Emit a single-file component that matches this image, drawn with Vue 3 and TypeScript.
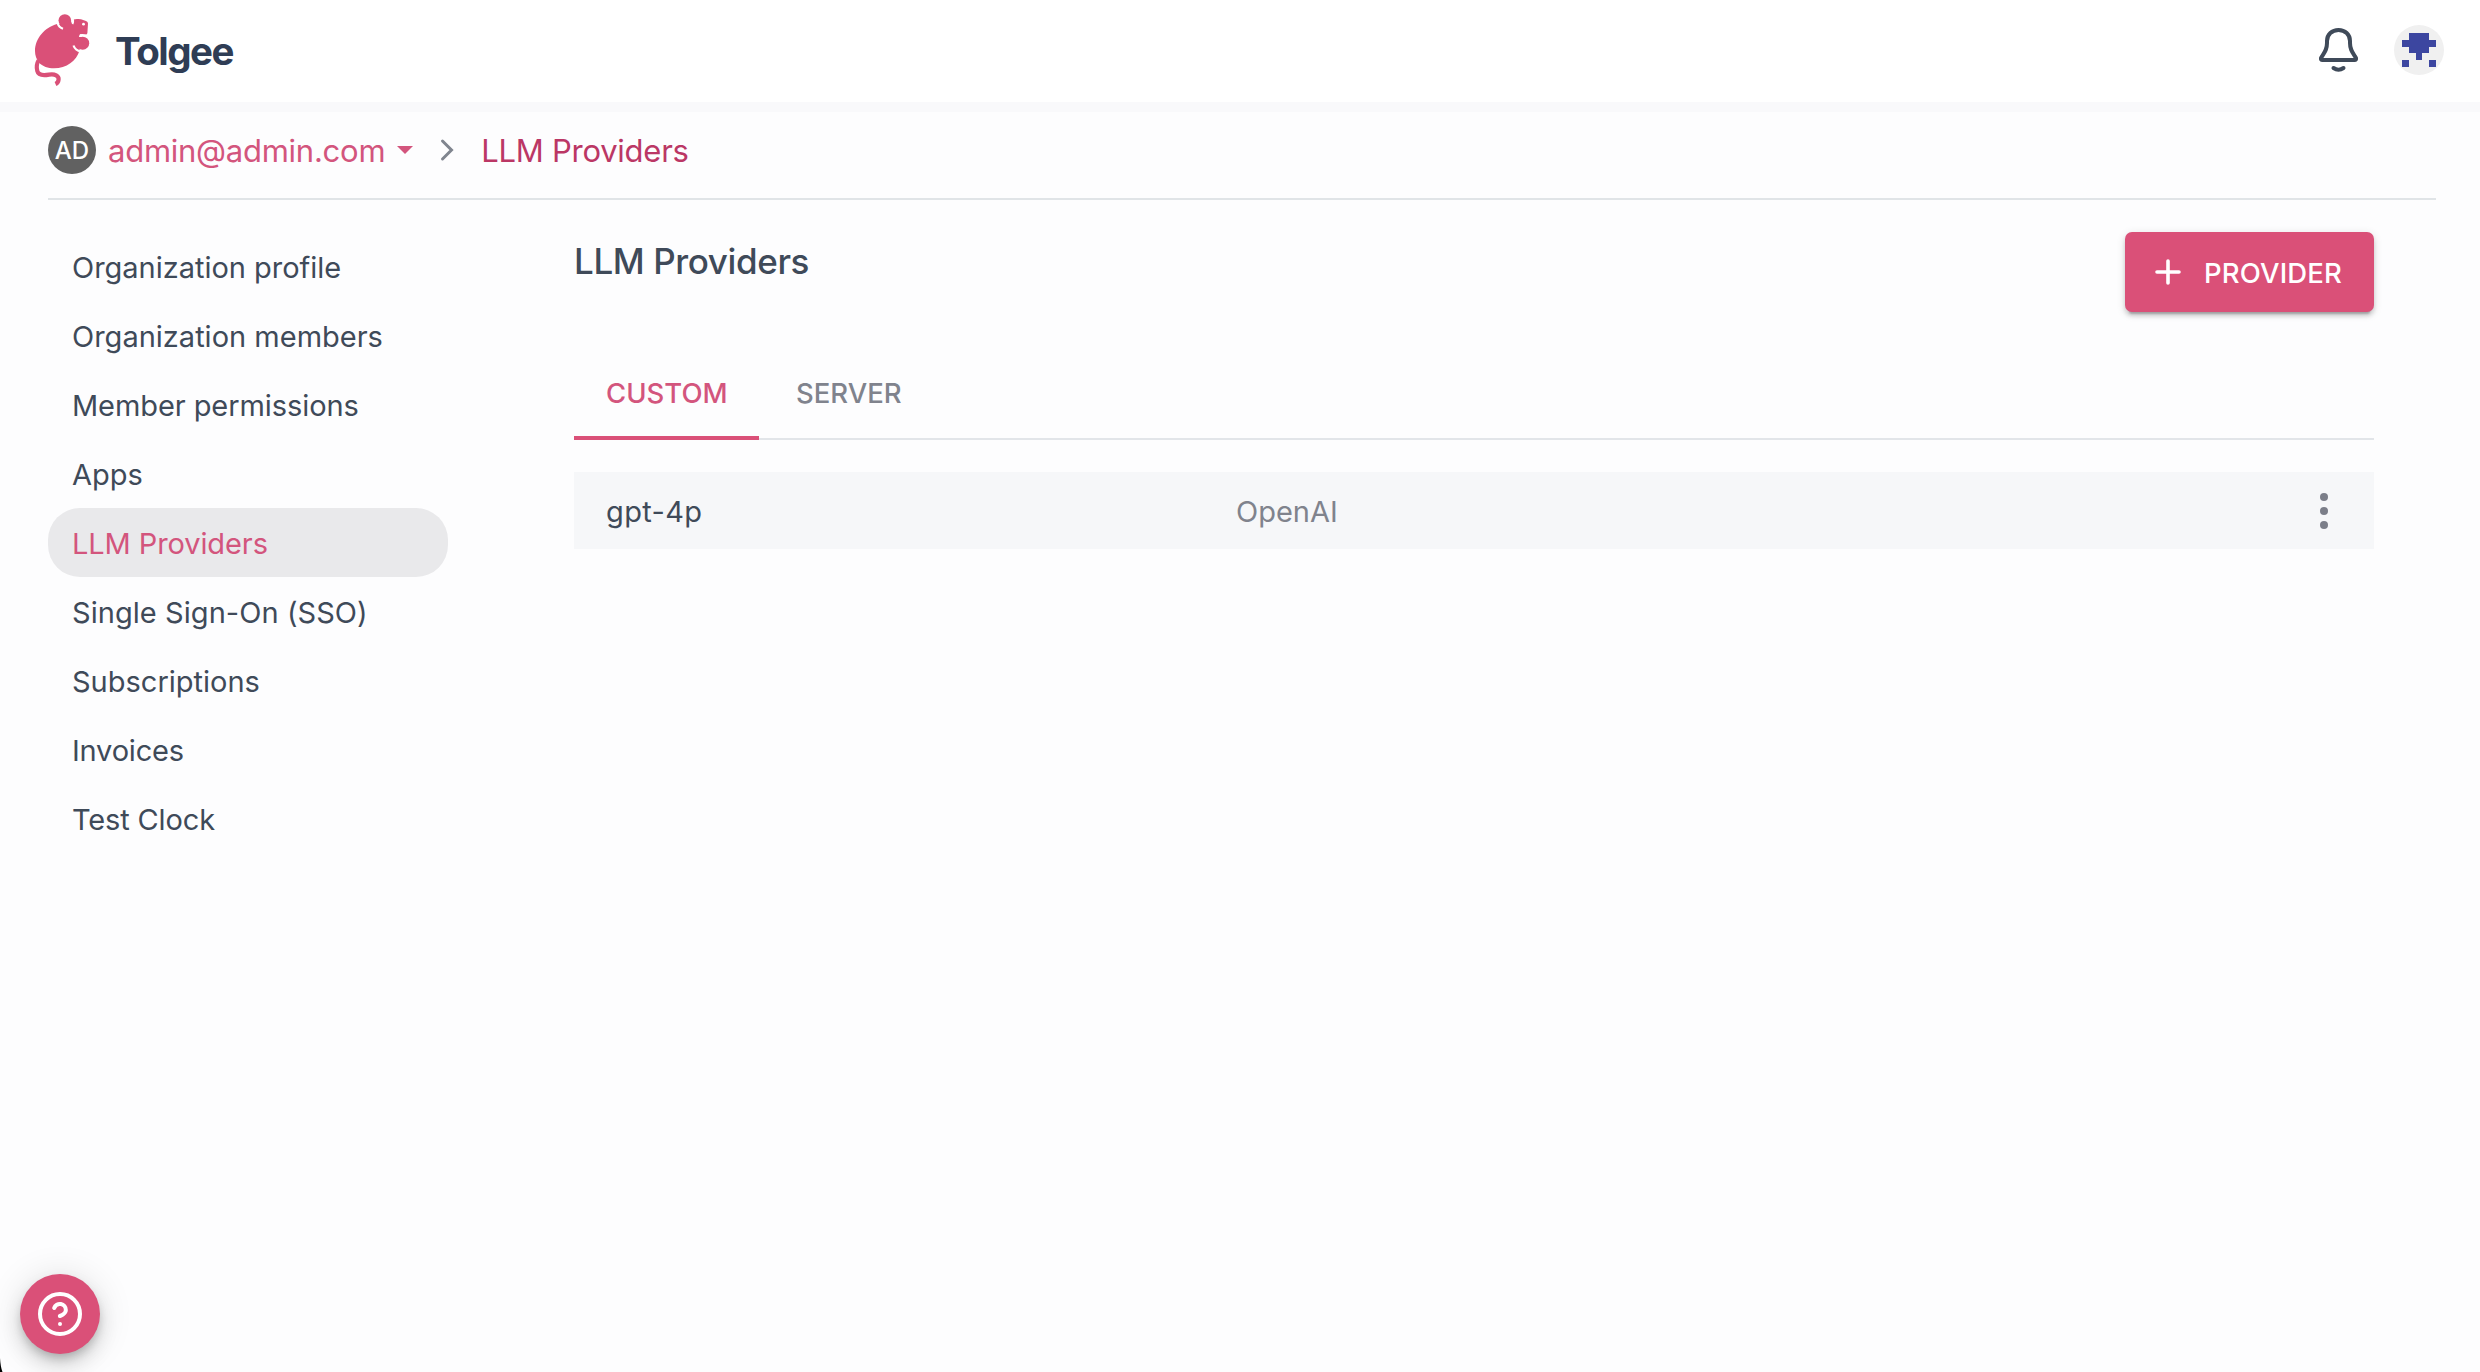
<script setup lang="ts">
interface MenuItem {
  label: string
  tracking: number
  active?: boolean
}

interface Provider {
  name: string
  type: string
}

const menu: MenuItem[] = [
  { label: 'Organization profile', tracking: -0.02 },
  { label: 'Organization members', tracking: 0 },
  { label: 'Member permissions', tracking: -0.08 },
  { label: 'Apps', tracking: 0 },
  { label: 'LLM Providers', tracking: -0.1, active: true },
  { label: 'Single Sign-On (SSO)', tracking: 0.06 },
  { label: 'Subscriptions', tracking: 0 },
  { label: 'Invoices', tracking: -0.2 },
  { label: 'Test Clock', tracking: -0.15 },
]

const tabs: string[] = ['Custom', 'Server']
const activeTab = 'Custom'

const providers: Provider[] = [{ name: 'gpt-4p', type: 'OpenAI' }]

// Filled cells of the 5×5 identicon, as [column, row]
const identicon: [number, number][] = [
  [1, 0], [2, 0], [3, 0],
  [0, 1], [1, 1], [2, 1], [3, 1], [4, 1],
  [1, 2], [2, 2], [3, 2],
  [2, 3],
  [0, 4], [4, 4],
]
</script>

<template>
  <div class="page">
    <header class="topbar">
      <a class="brand">
        <svg class="mouse" width="60" height="74" viewBox="32 12 60 74">
          <path
            class="fill"
            d="M57 24C44.500 27.500 35 38.500 35 51C35 55.500 36.500 59.500 39 62.500C42.500 66.500 48 68.300 54 68.300C66.500 68.300 76.500 61 79.500 50.500L80 46L79 36L80 34.500L85.500 34.800Q87.300 34.800 87.400 33L88 23.500Q88 21.500 86 21L81 19.300Q79 18.800 77 19L73.500 19.500L71 24L64 24Z"
          />
          <path class="gap" d="M57.500 23C58.500 26 60.500 28 63 28.800" />
          <path class="gap" d="M72 17.500C73.300 19.800 73.300 22 72.300 24" />
          <path class="gap" d="M73.500 45.500C74.500 48.500 77 50.800 81 51.500" />
          <path class="gap" d="M80 35.300C83 34.700 86 35.300 89 37" />
          <circle class="fill" cx="64.800" cy="20.500" r="6.300" />
          <circle class="fill" cx="82.700" cy="43.200" r="6.500" />
          <path class="fill" d="M64 22L71 21L73 28L66 29ZM76 37L82 37L83 44L75 43Z" />
          <circle cx="83.500" cy="24.200" r="1.400" fill="#fff" />
          <path class="tail" d="M38.500 60.500C36.500 64 36.500 68 37.300 71C38.500 76 44 75.500 49 74.600C55 73.500 59 76 58.600 79.500C58.400 81.800 57 83.300 55.500 84" />
        </svg>
        <span class="brand-name">Tolgee</span>
      </a>
      <div class="actions">
        <svg class="bell" width="44" height="50" viewBox="0 0 44 50">
          <path d="M5 34C8.500 28.500 11 26 11 19V17C11 10.500 16 6 22.500 6S34 10.500 34 17V19C34 26 36.500 28.500 40 34Q40.500 36 38.500 36H6.500Q4.500 36 5 34Z" />
          <path d="M17.500 44Q22.500 47.500 27.500 44" />
        </svg>
        <div class="user">
          <svg width="34" height="34" viewBox="0 0 5 5" shape-rendering="crispEdges">
            <rect v-for="([x, y], i) in identicon" :key="i" :x="x" :y="y" width="1" height="1" fill="#3c46a0" />
          </svg>
        </div>
      </div>
    </header>

    <nav class="breadcrumb">
      <div class="org-avatar">AD</div>
      <span class="org">admin@admin.com</span>
      <svg class="caret" width="16" height="8" viewBox="0 0 16 8"><path d="M0 0H16L8 8Z" /></svg>
      <svg class="chevron" width="14" height="24" viewBox="0 0 14 24"><path d="M2.500 3L11.500 12L2.500 21" /></svg>
      <span class="current">LLM Providers</span>
    </nav>

    <div class="body">
      <aside class="menu">
        <a
          v-for="item in menu"
          :key="item.label"
          class="menu-item"
          :class="{ active: item.active }"
          :style="{ letterSpacing: item.tracking + 'px' }"
        >{{ item.label }}</a>
      </aside>

      <main class="content">
        <div class="heading">
          <h1>LLM Providers</h1>
          <button class="add">
            <svg width="26" height="26" viewBox="0 0 26 26"><path d="M13 2V24M2 13H24" /></svg>
            <span>PROVIDER</span>
          </button>
        </div>

        <div class="tabs">
          <div v-for="tab in tabs" :key="tab" class="tab" :class="{ selected: tab === activeTab }">
            <span>{{ tab.toUpperCase() }}</span>
          </div>
        </div>

        <div v-for="p in providers" :key="p.name" class="row">
          <span class="name">{{ p.name }}</span>
          <span class="type">{{ p.type }}</span>
          <svg class="more" width="8" height="36" viewBox="0 0 8 36">
            <circle cx="4" cy="4" r="4" />
            <circle cx="4" cy="18" r="4" />
            <circle cx="4" cy="32" r="4" />
          </svg>
        </div>
      </main>
    </div>

    <button class="help">
      <svg width="48" height="48" viewBox="0 0 24 24">
        <circle cx="12" cy="12" r="10" />
        <path d="M9.090 9a3 3 0 0 1 5.830 1c0 2-3 3-3 3M12 17h.01" />
      </svg>
    </button>
    <svg class="corner" width="3" height="14" viewBox="0 0 3 14"><path d="M0 0Q0.500 9 2.500 14H0Z" /></svg>
  </div>
</template>

<style>
body {
  margin: 0;
  background: #fdfdfe;
}
</style>

<style scoped>
.page {
  position: relative;
  box-sizing: border-box;
  width: 2480px;
  height: 1372px;
  overflow: hidden;
  background: #fdfdfe;
  color: #3f4a59;
  font-family: Inter, 'Liberation Sans', sans-serif;
  font-size: 29px;
}

svg {
  display: block;
  flex: none;
}

.topbar {
  display: flex;
  align-items: center;
  justify-content: space-between;
  box-sizing: border-box;
  height: 102px;
  padding: 0 36px 0 32px;
  background: #fff;
  box-shadow: 0 10px 0 #f9f9fb;
}

.brand {
  display: flex;
  align-items: center;
  gap: 23px;
}

.mouse {
  margin-bottom: 4px;
}

.mouse .fill {
  fill: #da5078;
}

.mouse .gap {
  fill: none;
  stroke: #fff;
  stroke-width: 2.2;
}

.mouse .tail {
  fill: none;
  stroke: #da5078;
  stroke-width: 4.2;
}

.brand-name {
  color: #2f3d55;
  font-size: 38.5px;
  font-weight: 700;
  letter-spacing: -1.5px;
}

.actions {
  display: flex;
  align-items: center;
  gap: 34px;
}

.bell {
  margin-bottom: 4px;
  fill: none;
  stroke: #3f4a59;
  stroke-width: 4;
  stroke-linecap: round;
  stroke-linejoin: round;
}

.user {
  display: flex;
  align-items: center;
  justify-content: center;
  width: 50px;
  height: 50px;
  margin-bottom: 2px;
  border-radius: 50%;
  background: #f0f0f0;
}

.breadcrumb {
  display: flex;
  align-items: center;
  box-sizing: border-box;
  height: 98px;
  margin: 0 44px 0 48px;
  border-bottom: 2px solid #e0e4e7;
  font-size: 31px;
}

.org-avatar {
  display: flex;
  align-items: center;
  justify-content: center;
  width: 48px;
  height: 48px;
  border-radius: 50%;
  background: #616161;
  color: #fff;
  font-size: 24px;
  font-weight: 500;
}

.org {
  margin-left: 12px;
  color: #d3557d;
  letter-spacing: -0.25px;
}

.caret {
  margin-left: 12px;
  fill: #d3557d;
}

.chevron {
  margin-left: 27px;
  fill: none;
  stroke: #80858f;
  stroke-width: 3;
  stroke-linecap: round;
}

.current {
  margin-left: 27px;
  color: #bb3765;
  letter-spacing: -0.26px;
}

.body {
  display: flex;
  gap: 126px;
  padding: 32px 106px 0 48px;
}

.menu {
  display: flex;
  flex-direction: column;
  width: 400px;
}

.menu-item {
  display: flex;
  align-items: center;
  box-sizing: border-box;
  height: 69px;
  padding: 2px 24px 0;
  border-radius: 32px;
  white-space: nowrap;
}

.menu-item.active {
  background: #e9e9eb;
  color: #d3557d;
}

.content {
  flex: 1;
}

.heading {
  display: flex;
  align-items: flex-start;
  justify-content: space-between;
}

h1 {
  margin: 8px 0 0;
  font-size: 35px;
  font-weight: 500;
  line-height: 42px;
  letter-spacing: -0.4px;
}

button {
  border: 0;
  padding: 0;
  font-family: inherit;
  color: #fff;
  background: #da5078;
}

.add {
  display: flex;
  align-items: center;
  gap: 23px;
  width: 249px;
  height: 80px;
  padding-left: 30px;
  border-radius: 7px;
  font-size: 27.5px;
  font-weight: 500;
  letter-spacing: 0.15px;
  box-shadow: 0 6px 2px -4px rgba(0, 0, 0, 0.2), 0 4px 4px rgba(0, 0, 0, 0.14), 0 2px 10px rgba(0, 0, 0, 0.12);
}

.add svg {
  fill: none;
  stroke: #fff;
  stroke-width: 3.6;
  stroke-linecap: round;
}

.add span {
  padding-top: 2px;
}

.tabs {
  display: flex;
  gap: 5px;
  box-sizing: border-box;
  height: 96px;
  margin-top: 32px;
  box-shadow: inset 0 -2px #e2e5e9;
}

.tab {
  display: flex;
  align-items: center;
  box-sizing: border-box;
  padding: 5px 32px 0;
  border-bottom: 4px solid transparent;
  color: #80838d;
  font-size: 27.5px;
  font-weight: 500;
}

.tab.selected {
  width: 185px;
  border-color: #da5078;
  color: #d3557d;
}

.row {
  display: flex;
  align-items: center;
  box-sizing: border-box;
  height: 77px;
  margin-top: 32px;
  padding: 0 46px 0 32px;
  background: #f6f7f9;
}

.name {
  width: 630px;
  padding-top: 2px;
  letter-spacing: 0.35px;
}

.type {
  flex: 1;
  padding-top: 2px;
  color: #80838d;
}

.more {
  fill: #7b7e89;
}

.help {
  position: absolute;
  left: 20px;
  bottom: 18px;
  display: flex;
  align-items: center;
  justify-content: center;
  width: 80px;
  height: 80px;
  border-radius: 50%;
  box-shadow: 0 6px 10px -2px rgba(0, 0, 0, 0.2), 0 12px 20px rgba(0, 0, 0, 0.12), 0 2px 36px rgba(0, 0, 0, 0.12);
}

.help svg {
  fill: none;
  stroke: #fff;
  stroke-width: 2;
  stroke-linecap: round;
  stroke-linejoin: round;
}

.corner {
  position: absolute;
  left: 0;
  bottom: 0;
}
</style>
